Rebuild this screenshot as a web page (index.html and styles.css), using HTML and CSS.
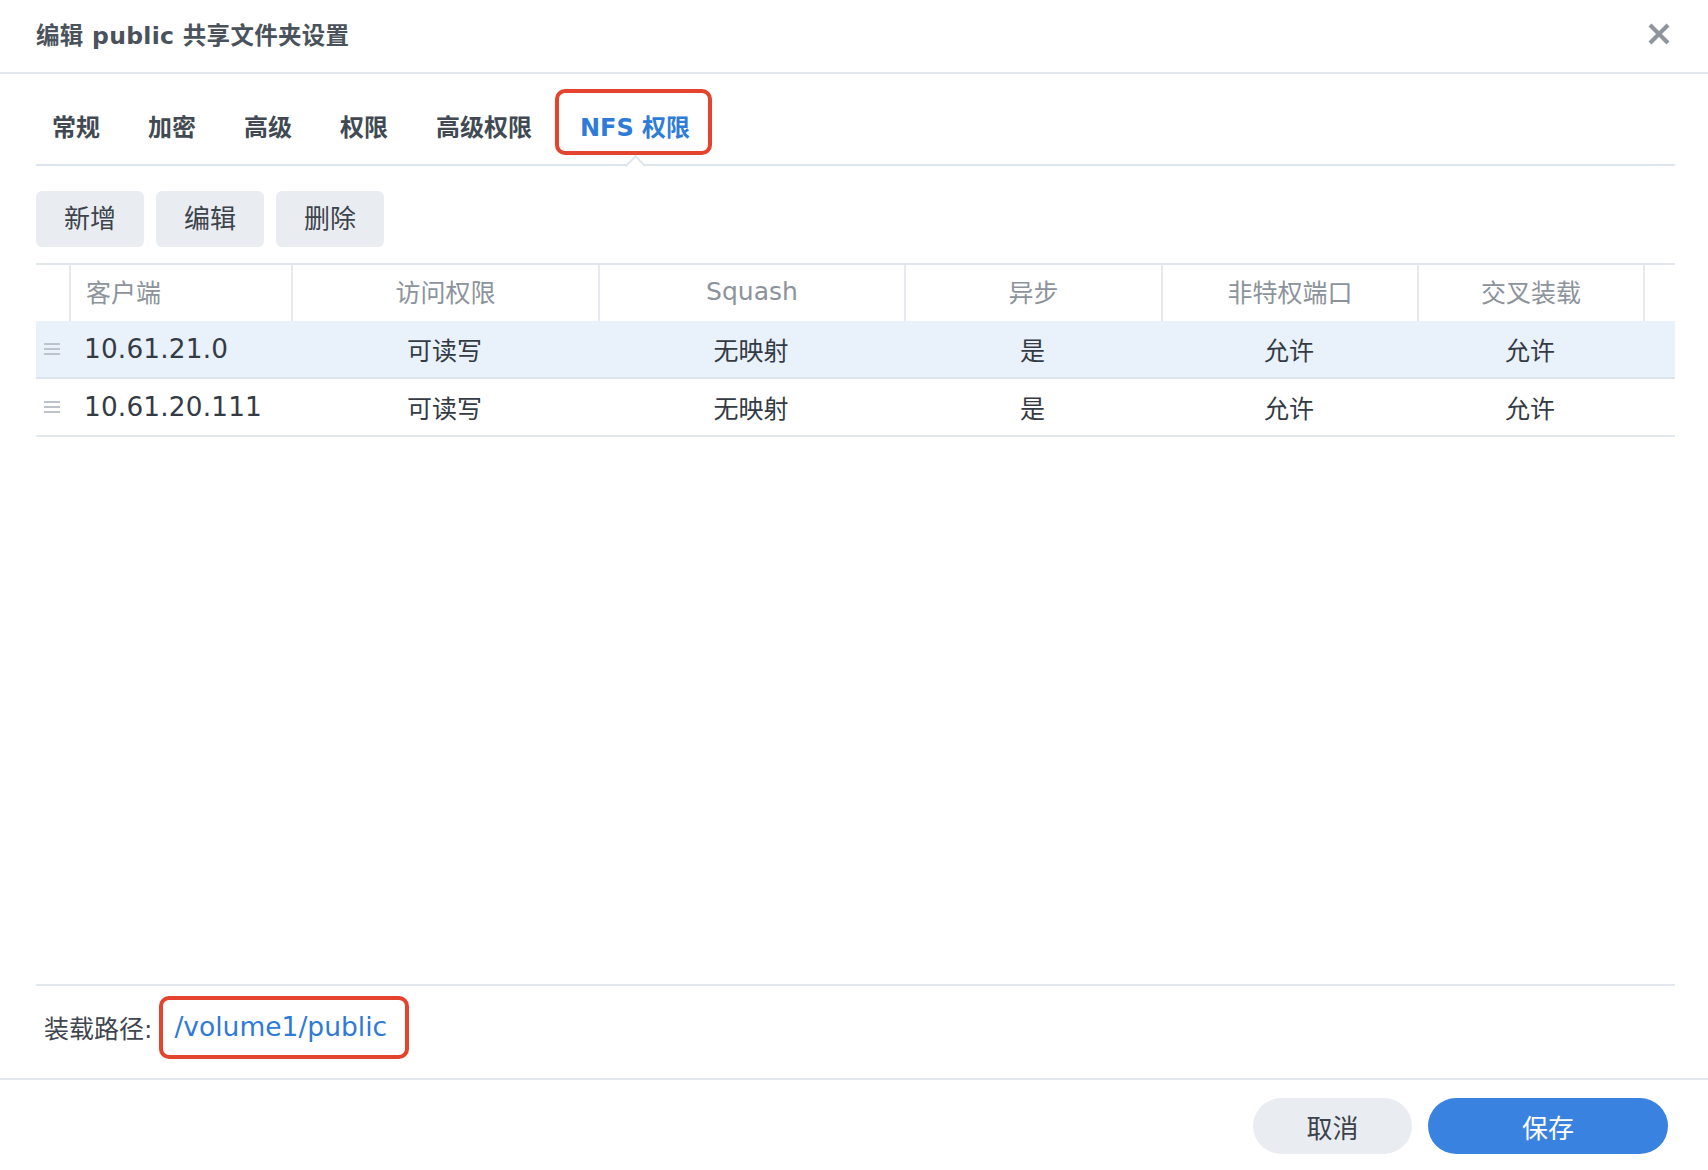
FILE: index.html
```html
<!DOCTYPE html>
<html lang="zh-CN">
<head>
<meta charset="utf-8">
<title>编辑 public 共享文件夹设置</title>
<link rel="stylesheet" href="styles.css">
</head>
<body>
<div class="dialog">
  <header class="dlg-header">
    <h1 class="dlg-title">编辑 public 共享文件夹设置</h1>
    <button class="close-btn" aria-label="关闭">
      <svg width="24" height="24" viewBox="0 0 24 24"><path d="M3 3 L21 21 M21 3 L3 21" stroke="#8f959d" stroke-width="4.2" stroke-linecap="butt" fill="none"/></svg>
    </button>
  </header>

  <div class="dlg-body">
    <nav class="tabs">
      <span class="tab">常规</span>
      <span class="tab">加密</span>
      <span class="tab">高级</span>
      <span class="tab">权限</span>
      <span class="tab">高级权限</span>
      <span class="tab active">NFS 权限<span class="notch"></span></span>
    </nav>

    <div class="toolbar">
      <button class="btn">新增</button>
      <button class="btn">编辑</button>
      <button class="btn">删除</button>
    </div>

    <table class="grid">
      <colgroup>
        <col class="c-drag"><col class="c-client"><col class="c-access"><col class="c-squash">
        <col class="c-async"><col class="c-port"><col class="c-cross"><col class="c-end">
      </colgroup>
      <thead>
        <tr>
          <th></th>
          <th class="left">客户端</th>
          <th>访问权限</th>
          <th>Squash</th>
          <th>异步</th>
          <th>非特权端口</th>
          <th>交叉装载</th>
          <th></th>
        </tr>
      </thead>
      <tbody>
        <tr class="selected">
          <td><span class="handle"><i></i><i></i><i></i></span></td>
          <td class="left ip">10.61.21.0</td>
          <td>可读写</td>
          <td>无映射</td>
          <td>是</td>
          <td>允许</td>
          <td>允许</td>
          <td></td>
        </tr>
        <tr>
          <td><span class="handle"><i></i><i></i><i></i></span></td>
          <td class="left ip">10.61.20.111</td>
          <td>可读写</td>
          <td>无映射</td>
          <td>是</td>
          <td>允许</td>
          <td>允许</td>
          <td></td>
        </tr>
      </tbody>
    </table>

    <div class="spacer"></div>

    <div class="mount-row">
      <span class="mount-label">装载路径:</span>
      <span class="mount-path">/volume1/public</span>
    </div>
  </div>

  <footer class="dlg-footer">
    <button class="pill cancel">取消</button>
    <button class="pill primary">保存</button>
  </footer>
</div>
</body>
</html>
```

FILE: styles.css
```css
* { box-sizing: border-box; }

html, body {
  margin: 0;
  padding: 0;
  background: #ffffff;
}

body {
  font-family: "DejaVu Sans", "Noto Sans CJK SC", sans-serif;
  color: #353c45;
}

.dialog {
  width: 1708px;
  height: 1170px;
  display: flex;
  flex-direction: column;
  background: #ffffff;
}

/* header */
.dlg-header {
  height: 74px;
  border-bottom: 2px solid #e3e8ee;
  display: flex;
  align-items: center;
  justify-content: space-between;
  padding: 0 37px 4px 36px;
}

.dlg-title {
  margin: 0;
  font-size: 23.5px;
  font-weight: bold;
  color: #4a525c;
  letter-spacing: 0.3px;
}

.close-btn {
  border: 0;
  background: transparent;
  padding: 0;
  width: 24px;
  height: 24px;
  display: flex;
}

/* body */
.dlg-body {
  flex: 1;
  display: flex;
  flex-direction: column;
  padding: 0 33px 0 36px;
}

.tabs {
  display: flex;
  padding: 36px 0 18px 0;
  border-bottom: 2px solid #dde4eb;
  position: relative;
}

.tab {
  position: relative;
  height: 36px;
  line-height: 36px;
  padding: 0 16px;
  margin-right: 16px;
  font-size: 24px;
  font-weight: bold;
  color: #414952;
  white-space: nowrap;
}

.tab.active {
  color: #2f7bd8;
}

/* annotation box around active tab */
.tab.active::before {
  content: "";
  position: absolute;
  left: -9px;
  right: -6px;
  top: -21px;
  bottom: -9px;
  border: 4px solid #e4432d;
  border-radius: 10px;
}

.notch {
  position: absolute;
  left: 50%;
  bottom: -27px;
  width: 15px;
  height: 15px;
  margin-left: -7px;
  background: #ffffff;
  border-top: 2px solid #dde4eb;
  border-left: 2px solid #dde4eb;
  transform: rotate(45deg);
}

/* toolbar */
.toolbar {
  display: flex;
  gap: 12px;
  margin-top: 25px;
  margin-bottom: 16px;
}

.btn {
  height: 56px;
  width: 108px;
  padding: 0;
  border: 0;
  border-radius: 6px;
  background: #e9edf1;
  color: #3d444c;
  font-family: inherit;
  font-size: 26px;
  line-height: 54px;
}

/* grid */
.grid {
  width: 1639px;
  table-layout: fixed;
  border-collapse: separate;
  border-spacing: 0;
  border-top: 2px solid #e0e6ec;
}

.c-drag { width: 33px; }
.c-client { width: 222px; }
.c-access { width: 307px; }
.c-squash { width: 306px; }
.c-async { width: 257px; }
.c-port { width: 256px; }
.c-cross { width: 226px; }
.c-end { width: 32px; }

.grid th {
  height: 56px;
  padding: 0 0 4px 0;
  font-size: 25px;
  font-weight: normal;
  color: #8c939b;
  text-align: center;
  white-space: nowrap;
}

.grid th + th {
  border-left: 2px solid #e6eaef;
}

.grid td {
  height: 58px;
  padding: 0;
  font-size: 25px;
  color: #343b44;
  text-align: center;
  border-bottom: 2px solid #e3e8ee;
  white-space: nowrap;
}

.grid .left {
  text-align: left;
  padding-left: 15px;
}

.grid td.ip {
  font-size: 26.3px;
  letter-spacing: 0.2px;
}

.grid tr.selected td {
  background: #e9f1fb;
  border-bottom-color: #dbe3ec;
}

.handle {
  display: flex;
  flex-direction: column;
  gap: 3px;
  width: 16px;
  margin-left: 8px;
}

.handle i {
  display: block;
  height: 2px;
  background: #bcc3cb;
}

.spacer {
  flex: 1;
}

/* mount path */
.mount-row {
  height: 94px;
  border-top: 2px solid #e3e8ee;
  display: flex;
  align-items: center;
  padding-left: 8px;
  padding-bottom: 10px;
}

.mount-label {
  font-size: 25px;
  color: #3f464f;
}

.mount-path {
  margin-left: 7px;
  padding: 11px 18px 12px 11px;
  border: 4px solid #e4432d;
  border-radius: 10px;
  font-size: 26.5px;
  line-height: 32px;
  color: #2f7ad6;
}

/* footer */
.dlg-footer {
  height: 92px;
  border-top: 2px solid #e3e8ee;
  display: flex;
  justify-content: flex-end;
  align-items: flex-start;
  gap: 16px;
  padding: 18px 40px 0 0;
}

.pill {
  height: 56px;
  border: 0;
  border-radius: 28px;
  font-family: inherit;
  font-size: 26px;
}

.pill.cancel {
  width: 159px;
  background: #e9edf2;
  color: #3b424b;
}

.pill.primary {
  width: 240px;
  background: #3a82e0;
  color: #ffffff;
}
```
